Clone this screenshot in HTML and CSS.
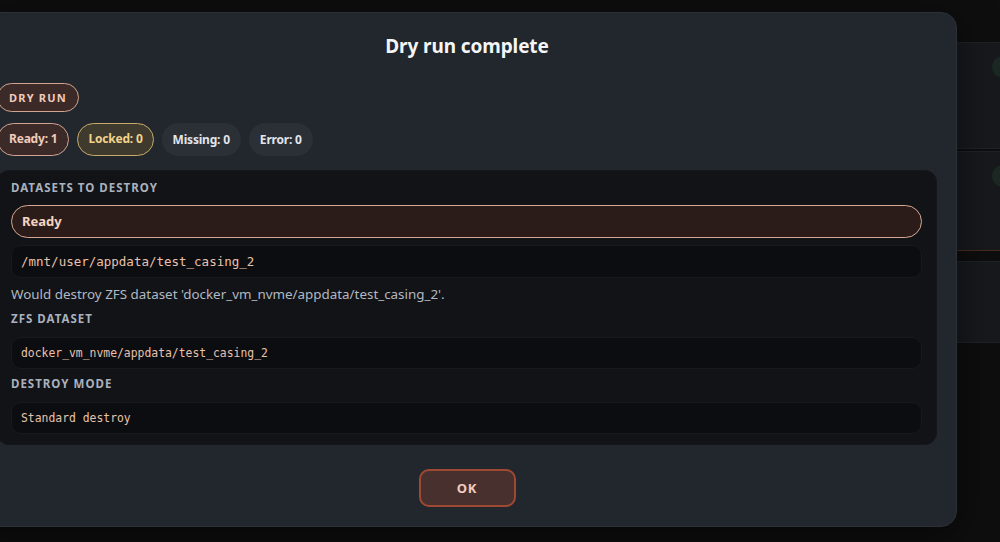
FILE: index.html
```html
<!DOCTYPE html>
<html lang="en">
<head>
	<meta charset="UTF-8">
	<title>Dry run complete</title>
	<link rel="stylesheet" href="styles.css">
</head>
<body>
	<div class="page">
		<div class="cards">
			<div class="card card_a"><span class="dot"></span></div>
			<div class="card card_b"><span class="dot"></span></div>
			<div class="card card_c"></div>
		</div>
	</div>

	<div class="modal">
		<h2 class="modal_title">Dry run complete</h2>
		<div class="tag_row">
			<span class="tag tag_dry">DRY RUN</span>
		</div>
		<div class="count_row">
			<span class="pill pill_ready">Ready: 1</span>
			<span class="pill pill_locked">Locked: 0</span>
			<span class="pill">Missing: 0</span>
			<span class="pill">Error: 0</span>
		</div>
		<div class="panel">
			<div class="label">DATASETS TO DESTROY</div>
			<div class="status_row">Ready</div>
			<div class="code_box first_box">/mnt/user/appdata/test_casing_2</div>
			<p class="desc">Would destroy ZFS dataset 'docker_vm_nvme/appdata/test_casing_2'.</p>
			<div class="label">ZFS DATASET</div>
			<div class="code_box">docker_vm_nvme/appdata/test_casing_2</div>
			<div class="label">DESTROY MODE</div>
			<div class="code_box">Standard destroy</div>
		</div>
		<div class="actions">
			<button class="btn_ok">OK</button>
		</div>
	</div>
</body>
</html>
```

FILE: styles.css
```css
*{
	margin: 0;
	padding: 0;
	box-sizing: border-box;
}
html,body{
	width: 1000px;
	height: 542px;
	overflow: hidden;
}
body{
	background-color: #0e0e0f;
	font-family: "Noto Sans", "Open Sans", sans-serif;
	color: #e4e7ec;
	position: relative;
}
.page{
	height: 100%;
	padding-top: 42px;
}
.cards{
	width: 420px;
	margin-left: auto;
	margin-right: -20px;
	display: flex;
	flex-direction: column;
	gap: 2px;
}
.card{
	background-color: #17191d;
	border: 1px solid #1f2227;
	border-radius: 8px;
	position: relative;
}
.card_a{
	height: 107px;
}
.card_b{
	height: 100px;
	border-bottom: 1px solid #4a2a1e;
}
.card_c{
	height: 82px;
	margin-top: 8px;
}
.dot{
	position: absolute;
	right: 5px;
	top: 13px;
	width: 22px;
	height: 22px;
	border-radius: 50%;
	background-color: #1b2823;
}

/* modal */
.modal{
	position: absolute;
	top: 12px;
	left: -23px;
	width: 980px;
	height: 515px;
	background-color: #22262d;
	border: 1px solid #2c3037;
	border-radius: 16px;
	padding: 21px 19px 20px 19px;
	display: flex;
	flex-direction: column;
	box-shadow: 0 10px 40px rgba(0,0,0,0.5);
}
.modal_title{
	text-align: center;
	font-size: 19px;
	line-height: 24px;
	font-weight: 700;
	color: #f4f5f7;
	letter-spacing: -0.1px;
}
.tag_row{
	margin-top: 25px;
	display: flex;
}
.tag{
	height: 29px;
	line-height: 27px;
	padding: 0 11px;
	border-radius: 15px;
	font-size: 11px;
	font-weight: 700;
	letter-spacing: 1.2px;
}
.tag_dry{
	background-color: #3b2a28;
	border: 1.5px solid #d2a491;
	color: #f2cbba;
}
.count_row{
	margin-top: 11px;
	display: flex;
	gap: 8px;
}
.pill{
	height: 33px;
	line-height: 33px;
	padding: 0 11px;
	border-radius: 17px;
	font-size: 12px;
	font-weight: 700;
	letter-spacing: -0.2px;
	background-color: #2b2f36;
	color: #e2e5ea;
}
.pill_ready{
	background-color: #3b2a28;
	border: 1.5px solid #d2a491;
	color: #f2cbba;
	line-height: 30px;
}
.pill_locked{
	background-color: #3f3a2e;
	border: 1.5px solid #c7ab6b;
	color: #f1d38c;
	line-height: 30px;
	padding: 0 10px;
}

/* panel */
.panel{
	margin-top: 14px;
	background-color: #111317;
	border: 1px solid #15171b;
	border-radius: 12px;
	padding: 9px 14px 10px 13px;
	display: flex;
	flex-direction: column;
}
.label{
	font-size: 11.5px;
	line-height: 16px;
	font-weight: 700;
	letter-spacing: 1px;
	color: #aab1bd;
	margin-top: 7px;
}
.label:first-child{
	margin-top: 0;
}
.status_row{
	margin-top: 9px;
	height: 33px;
	line-height: 31px;
	padding: 0 10px;
	border-radius: 17px;
	background-color: #2c1c19;
	border: 1px solid #d6a893;
	font-size: 13px;
	font-weight: 700;
	color: #f6d4c3;
}
.code_box{
	margin-top: 10px;
	height: 32px;
	line-height: 30px;
	padding: 0 9px;
	border-radius: 10px;
	background-color: #0c0d10;
	border: 1px solid #17191d;
	font-family: "DejaVu Sans Mono", "Liberation Mono", monospace;
	font-size: 11.4px;
	color: #e8c2ab;
}
.first_box{
	margin-top: 7px;
	height: 33px;
	line-height: 31px;
	font-size: 12.5px;
}
.desc{
	margin-top: 7px;
	margin-bottom: 1px;
	font-size: 13.4px;
	line-height: 18px;
	color: #b2b8c1;
}

/* footer */
.actions{
	margin-top: 24px;
	display: flex;
	justify-content: center;
}
.btn_ok{
	width: 97px;
	height: 38px;
	border-radius: 10px;
	background-color: #47302e;
	border: 2px solid #9e4a32;
	color: #f3cbbb;
	font-family: "Noto Sans", "Open Sans", sans-serif;
	font-size: 13px;
	font-weight: 700;
	letter-spacing: 0.8px;
	cursor: pointer;
}
```
